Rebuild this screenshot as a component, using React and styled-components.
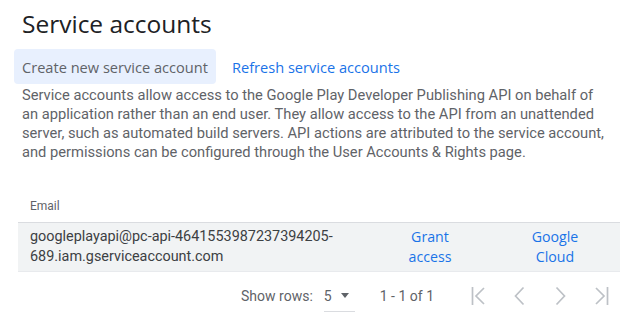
import styled, { createGlobalStyle } from "styled-components"

const Global = createGlobalStyle`
    body {
        margin: 0;
        background: #fff;
        font-family: Roboto, "Liberation Sans", sans-serif;
    }
`
const Page = styled.div`
    width: 634px;
    height: 324px;
    overflow: hidden;
    padding: 7px 14px 0 22px;
    box-sizing: border-box;
`
const Title = styled.h1`
    margin: 0;
    font-family: "Open Sans", sans-serif;
    font-weight: 400;
    font-size: 24.5px;
    line-height: 33px;
    color: #202124;
`
const Actions = styled.div`
    display: flex;
    align-items: center;
    gap: 8px;
    margin: 9px 0 0 -8px;
`
const Button = styled.button`
    height: 35px;
    padding: 0 8px;
    border: none;
    border-radius: 4px;
    background: ${props => props.$filled ? "#e8f0fe" : "transparent"};
    color: ${props => props.$filled ? "#5f6368" : "#1a73e8"};
    font-family: "Open Sans", sans-serif;
    font-size: 14.6px;
    font-weight: 500;
    cursor: pointer;
`
const Desc = styled.p`
    margin: 2px 0 0;
    font-size: 14.7px;
    line-height: 19px;
    color: #5f6368;
    white-space: nowrap;
`
const Table = styled.div`
    margin: 28px 0 0 -4px;
    width: 602px;
`
const Row = styled.div`
    display: grid;
    grid-template-columns: 1fr 120px 130px;
    align-items: center;
    background: ${props => props.$head ? "transparent" : "#f1f3f4"};
    border-bottom: 1px solid ${props => props.$head ? "#dadce0" : "#e8eaed"};
    min-height: ${props => props.$head ? "32px" : "48px"};
`
const HeadCell = styled.div`
    padding: 0 12px;
    font-size: 12px;
    color: #5f6368;
`
const Cell = styled.div`
    padding: 0 12px;
    font-size: 14.4px;
    line-height: 20px;
    color: #3c4043;
`
const LinkCell = styled.a`
    text-align: center;
    font-family: "Open Sans", sans-serif;
    font-size: 14.2px;
    font-weight: 500;
    line-height: 20px;
    color: #1a73e8;
`
const Pager = styled.div`
    display: flex;
    align-items: center;
    justify-content: flex-end;
    height: 48px;
    font-size: 14px;
    color: #5f6368;
`
const RowsLabel = styled.span`
    margin-right: 11px;
`
const Select = styled.div`
    display: flex;
    align-items: center;
    gap: 9px;
    width: 31px;
    height: 32px;
    border-bottom: 1px solid #dadce0;
    margin-right: 25px;
    box-sizing: border-box;
`
const Caret = styled.span`
    width: 0;
    height: 0;
    border-left: 4.5px solid transparent;
    border-right: 4.5px solid transparent;
    border-top: 5px solid #5f6368;
`
const Range = styled.span`
    margin-right: 26px;
`
const IconBtn = styled.span`
    width: 40px;
    height: 40px;
    display: flex;
    align-items: center;
    justify-content: center;
    color: #bdc1c6;
`

const Icon = ({ d }) => (
    <svg width="24" height="24" viewBox="0 0 24 24" fill="none" stroke="currentColor" strokeWidth="1.7">
        {d.map((p, i) => <path key={i} d={p} />)}
    </svg>
)

const App = () => {
  return (
    <Page>
        <Global />
        <Title>Service accounts</Title>
        <Actions>
            <Button $filled>Create new service account</Button>
            <Button>Refresh service accounts</Button>
        </Actions>
        <Desc>
            Service accounts allow access to the Google Play Developer Publishing API on behalf of<br />
            an application rather than an end user. They allow access to the API from an unattended<br />
            server, such as automated build servers. API actions are attributed to the service account,<br />
            and permissions can be configured through the User Accounts &amp; Rights page.
        </Desc>
        <Table>
            <Row $head>
                <HeadCell>Email</HeadCell>
                <HeadCell />
                <HeadCell />
            </Row>
            <Row>
                <Cell>googleplayapi@pc-api-4641553987237394205-<br />689.iam.gserviceaccount.com</Cell>
                <LinkCell>Grant<br />access</LinkCell>
                <LinkCell>Google<br />Cloud</LinkCell>
            </Row>
            <Pager>
                <RowsLabel>Show rows:</RowsLabel>
                <Select>5 <Caret /></Select>
                <Range>1 - 1 of 1</Range>
                <IconBtn><Icon d={["M4.5 3v18", "M16 4l-8 8 8 8"]} /></IconBtn>
                <IconBtn><Icon d={["M15.5 3.5l-8 8.5 8 8.5"]} /></IconBtn>
                <IconBtn><Icon d={["M8.5 3.5l8 8.5-8 8.5"]} /></IconBtn>
                <IconBtn><Icon d={["M19.5 3v18", "M8 4l8 8-8 8"]} /></IconBtn>
            </Pager>
        </Table>
    </Page>
  )
}

export default App
